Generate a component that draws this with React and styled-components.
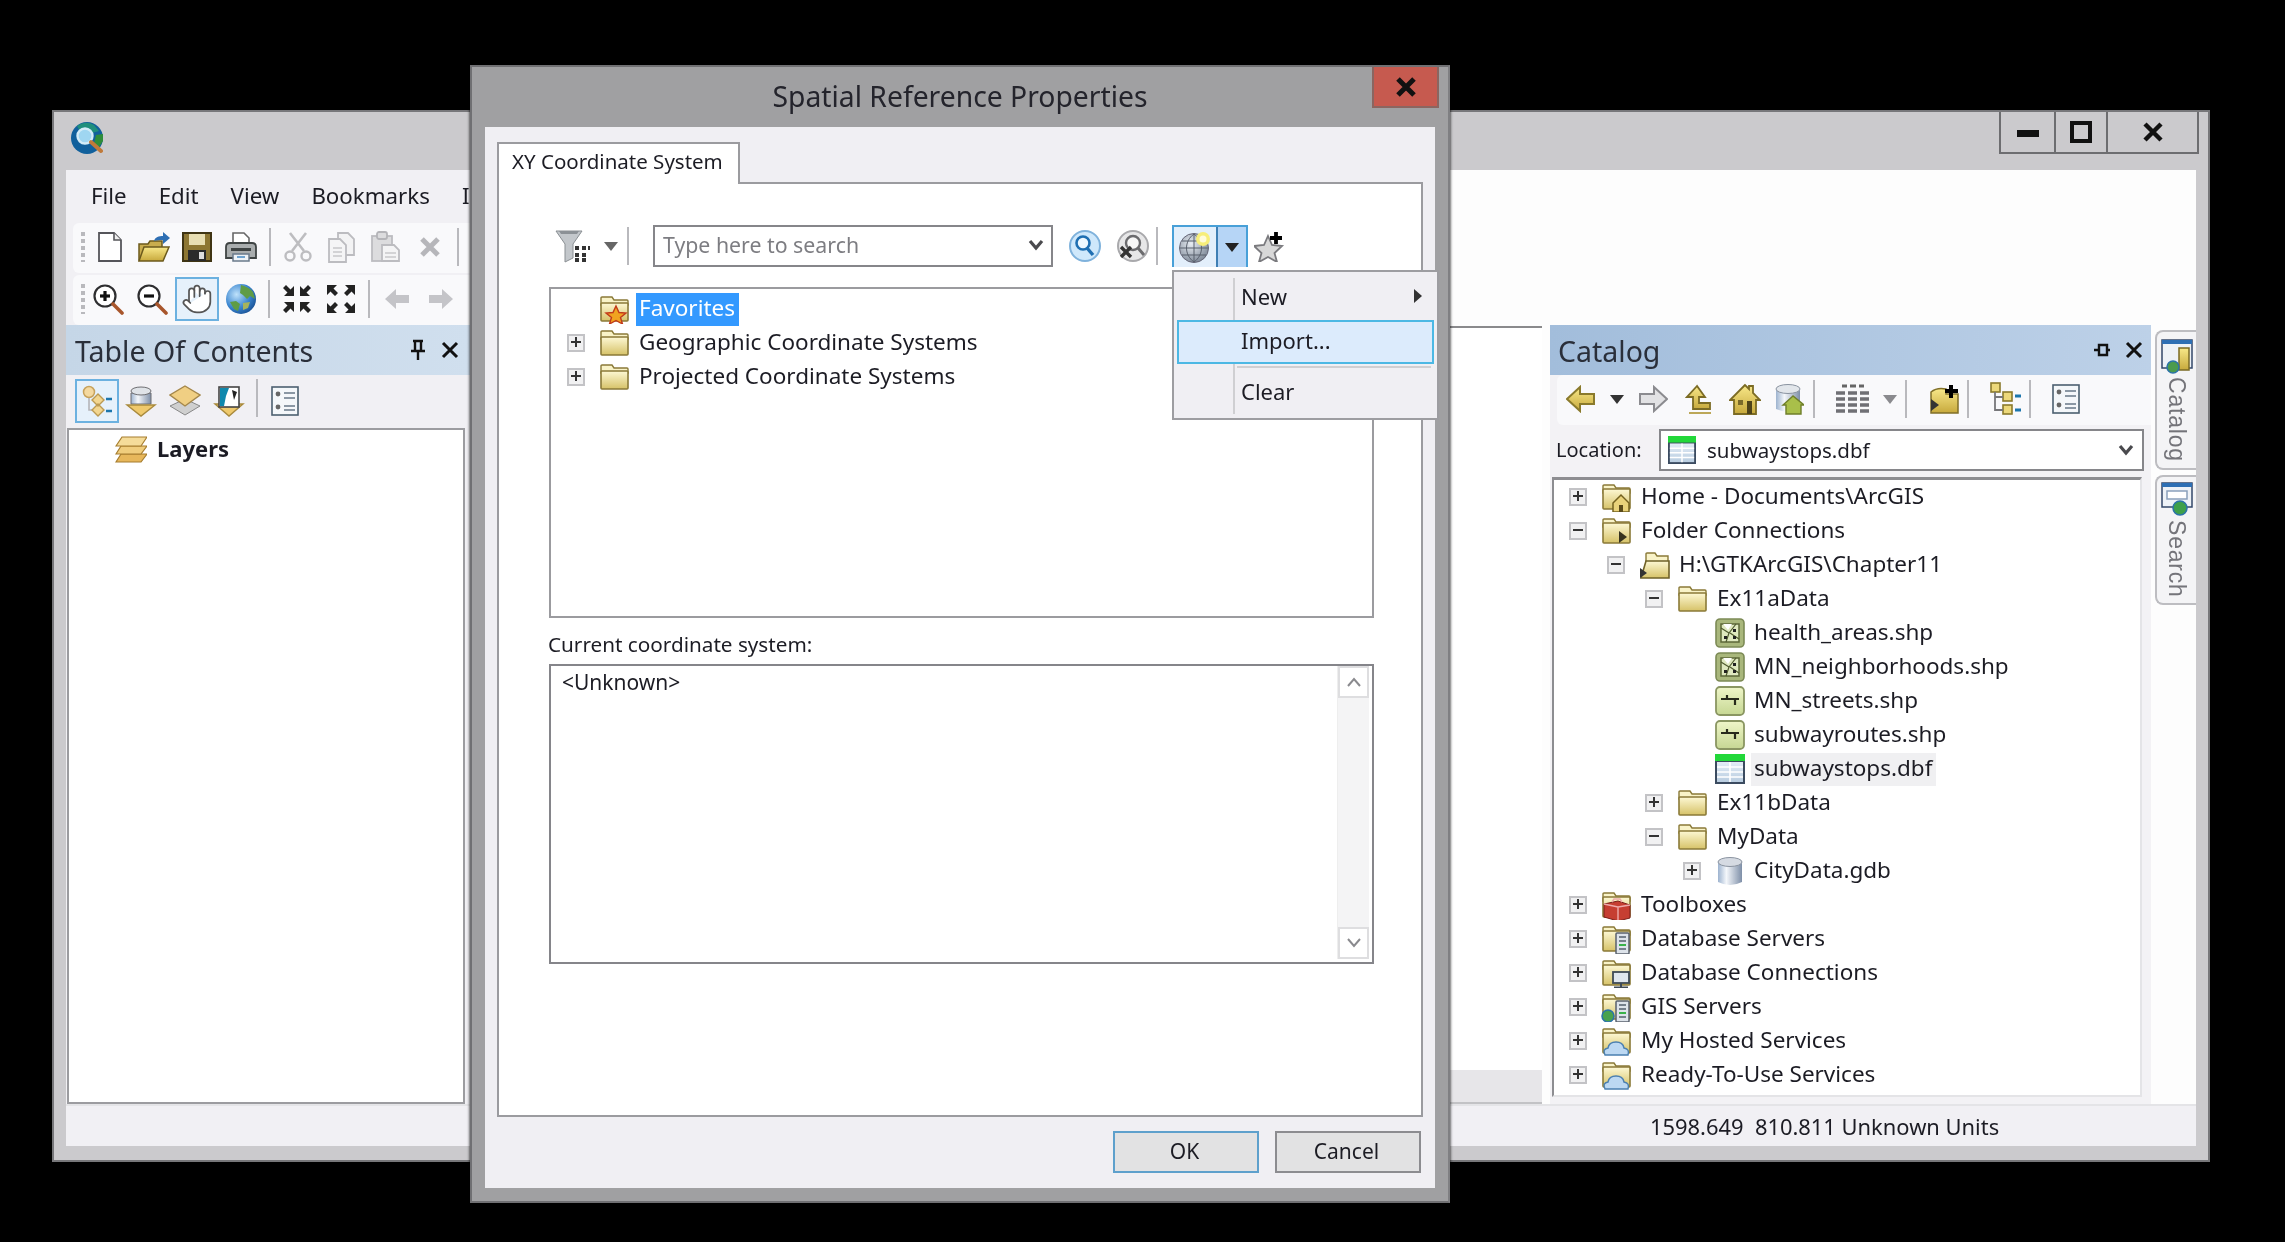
import React from 'react';
import styled, { createGlobalStyle } from 'styled-components';
import { Hand } from 'lucide-react';

const Global = createGlobalStyle`
  html, body { margin: 0; padding: 0; background: #000; }
  * { box-sizing: border-box; }
`;

const Desktop = styled.div`
  position: relative;
  width: 2285px;
  height: 1242px;
  background: #000;
  overflow: hidden;
  font-family: "Noto Sans", "Open Sans", sans-serif;
  color: #1c1c24;
  font-size: 22px;
  filter: blur(0.45px);
`;
const DefsSvg = styled.svg`position: absolute; width: 0; height: 0;`;
const Glyph = styled.svg`display: block; flex: none;`;

/* ---------- main window ---------- */
const MainWindow = styled.section`
  position: absolute;
  left: 52px; top: 110px;
  width: 2158px; height: 1052px;
  background: #cbcacd;
  border: 2px solid #77777a;
  display: flex;
  flex-direction: column;
`;
const MainTitle = styled.header`
  height: 58px;
  flex: none;
  display: flex;
  justify-content: space-between;
  align-items: flex-start;
  padding: 10px 9px 0 17px;
`;
const WinButtons = styled.div`
  display: flex;
  margin-top: -10px;
  height: 42px;
  border: 2px solid #6d6d70;
  border-top: 0;
`;
const WinButton = styled.div`
  width: ${p => p.$w}px;
  display: flex;
  align-items: center;
  justify-content: center;
  & + & { border-left: 2px solid #6d6d70; }
`;
const Client = styled.div`
  flex: 1;
  margin: 0 12px 14px;
  min-height: 0;
  display: flex;
  flex-direction: column;
  background: #f3f2f5;
`;
const MainRow = styled.div`flex: 1; min-height: 0; display: flex;`;
const LeftColumn = styled.div`
  width: 404px;
  flex: none;
  display: flex;
  flex-direction: column;
  overflow: hidden;
  background: #f1f0f4;
`;
const MenuBar = styled.nav`
  height: 53px;
  flex: none;
  display: flex;
  align-items: center;
  gap: 32px;
  padding: 0 0 3px 25px;
  white-space: nowrap;
  font-size: 22.3px;
`;
const ToolStrip = styled.div`
  height: 50px;
  flex: none;
  display: flex;
  align-items: center;
  margin-left: 7px;
  padding: 0 0 2px ${p => p.$pl ?? 15}px;
  margin-bottom: ${p => p.$mb ?? 2}px;
  background: #f9f9fb;
  border-radius: 6px 0 0 6px;
`;
const Grip = styled.i`
  position: relative;
  display: block;
  width: 4px;
  height: 30px;
  margin-right: 3px;
  margin-left: -7px;
  background: repeating-linear-gradient(180deg, #b9b9bd 0 4px, transparent 4px 7px);
`;
const Tool = styled.div`
  flex: none;
  width: ${p => p.$w ?? 44}px;
  height: 44px;
  padding-left: ${p => p.$pl ?? 0}px;
  display: flex;
  align-items: center;
  justify-content: center;
  gap: ${p => p.$gap ?? 0}px;
  ${p => p.$on && 'background:#e6f1fb; border:2px solid #6cb1e0;'}
`;
const Sep = styled.i`
  flex: none;
  display: block;
  width: ${p => p.$w ?? 12}px;
  height: 38px;
  background: linear-gradient(#b9b9bd,#b9b9bd) center/2px 100% no-repeat;
`;
const PaneHead = styled.div`
  height: 50px;
  flex: none;
  display: flex;
  align-items: center;
  justify-content: space-between;
  font-size: 28.5px;
  color: #2a2f3a;
  background: ${p => p.$grad};
`;
const HeadTitle = styled.span`padding: 1px 0 0 ${p => p.$pl}px;`;
const HeadTools = styled.div`
  display: flex;
  align-items: center;
  gap: ${p => p.$gap}px;
  padding-right: ${p => p.$pr}px;
`;
const TocStrip = styled.div`
  height: 53px;
  flex: none;
  display: flex;
  align-items: flex-start;
  padding: 4px 0 0 9px;
`;
const TocTree = styled.div`
  flex: 1;
  width: 398px;
  margin-left: 1px;
  background: #fff;
  border: 2px solid #9c9ca0;
  padding: 2px 0 0 46px;
`;
const LayerRow = styled.div`
  display: flex;
  align-items: center;
  gap: 10px;
  height: 32px;
  font-weight: 700;
  font-size: 22px;
`;
const RightColumn = styled.div`flex: 1; min-width: 0; display: flex; flex-direction: column; background: #fdfdfd;`;
const TopBlank = styled.div`height: 155px; flex: none; background: #fdfdfd;`;
const WorkRow = styled.div`flex: 1; min-height: 0; display: flex;`;
const MapColumn = styled.div`
  width: 1072px;
  flex: none;
  margin-right: 8px;
  display: flex;
  flex-direction: column;
  border-top: 2px solid #8a8a8c;
  margin-top: 1px;
`;
const MapCanvas = styled.div`flex: 1; background: #fff;`;
const MapScroll = styled.div`height: 34px; flex: none; background: #e7e6e9; border-bottom: 2px solid #c2c2c5;`;
const CatalogPane = styled.div`
  width: 601px;
  flex: none;
  display: flex;
  flex-direction: column;
  background: #f3f2f5;
`;
const LocationRow = styled.div`
  margin-top: 3px;
  height: 42px;
  flex: none;
  display: flex;
  align-items: center;
  padding: 1px 0 0 6px;
  font-size: 20px;
`;
const LocationLabel = styled.span`width: 103px; flex: none;`;
const Combo = styled.div`
  width: ${p => p.$w}px;
  height: 42px;
  flex: none;
  display: flex;
  align-items: center;
  gap: ${p => p.$gap ?? 9}px;
  padding: 0 ${p => p.$pr ?? 10}px ${p => p.$pb ?? 0}px ${p => p.$pl}px;
  background: #fff;
  border: 2px solid #86868a;
  color: ${p => p.$muted ? '#7d7d82' : 'inherit'};
  font-size: ${p => p.$fs}px;
`;
const ComboText = styled.span`flex: 1;`;
const CatTree = styled.div`
  margin: 7px 0 0 2px;
  width: 590px;
  height: 620px;
  flex: none;
  background: #fff;
  border-left: 2px solid #8d8d91;
  border-top: 3px solid #8d8d91;
  border-right: 2px solid #e4e4e7;
  border-bottom: 2px solid #e4e4e7;
  padding: 0 0 0 15px;
  overflow: hidden;
`;
const SideTabs = styled.aside`
  width: 45px;
  flex: none;
  padding: 5px 0 0 4px;
  display: flex;
  flex-direction: column;
  gap: 5px;
`;
const SideTab = styled.div`
  height: ${p => p.$h}px;
  display: flex;
  flex-direction: column;
  align-items: center;
  padding-top: ${p => p.$pt}px;
  background: #f4f4f6;
  border: 2px solid #bdbdc1;
  border-right: 0;
  border-radius: 8px 0 0 8px;
`;
const SideLabel = styled.span`
  writing-mode: vertical-rl;
  margin-top: ${p => p.$mt}px;
  font-family: "Liberation Sans", sans-serif;
  font-size: 23px;
  letter-spacing: 0.8px;
  line-height: 26px;
  color: #74747a;
`;
const StatusBar = styled.footer`
  height: 42px;
  flex: none;
  display: flex;
  align-items: center;
  justify-content: space-between;
  padding: 0 4px 0 1584px;
  font-size: 21.9px;
  background: #f1f0f4;
  border-top: 2px solid #e4e4e7;
`;
const Coord = styled.span`white-space: pre;`;

/* ---------- tree rows ---------- */
const Row = styled.div`
  height: 34px;
  display: flex;
  align-items: center;
  padding-left: ${p => p.$level * 38}px;
  white-space: nowrap;
  font-size: 22.5px;
`;
const ExpSlot = styled.span`width: 18px; height: 18px; flex: none; margin-right: 14px;`;
const Exp = styled.span`
  position: relative;
  display: block;
  width: 18px;
  height: 18px;
  background: #f1f1f2;
  border: 2px solid #c3c3c6;
  &::before {
    content: "";
    position: absolute;
    left: 2px; top: 5px;
    width: 10px; height: 2px;
    background: #333;
  }
  ${p => p.$plus && `&::after {
    content: "";
    position: absolute;
    left: 6px; top: 1px;
    width: 2px; height: 10px;
    background: #333;
  }`}
`;
const RowLabel = styled.span`
  margin-left: 6px;
  padding: 0 4px 0 3px;
  height: 33px;
  line-height: 30px;
  background: ${p => p.$sel === 'strong' ? '#3399ff' : p.$sel === 'soft' ? '#f0f0f2' : 'transparent'};
  color: ${p => p.$sel === 'strong' ? '#fff' : 'inherit'};
`;

/* ---------- dialog ---------- */
const Dialog = styled.section`
  position: absolute;
  left: 470px; top: 65px;
  width: 980px; height: 1138px;
  background: #a0a0a2;
  border: 2px solid #707073;
  border-right-color: #7f7f82;
  box-shadow: 0 0 3px #000;
  display: flex;
  flex-direction: column;
`;
const DialogTitle = styled.header`
  height: 60px;
  flex: none;
  display: grid;
  grid-template-columns: 78px 1fr 78px;
  font-size: 28.3px;
  color: #24242c;
`;
const TitleText = styled.h1`
  margin: 0;
  font: inherit;
  text-align: center;
  line-height: 58px;
`;
const CloseBox = styled.div`
  justify-self: end;
  margin-right: 9px;
  width: 67px;
  height: 41px;
  display: flex;
  align-items: center;
  justify-content: center;
  background: #c65a4f;
  border: 2px solid #8b6560;
  border-top: 0;
`;
const DialogBody = styled.div`
  flex: 1;
  margin: 0 13px 13px;
  padding: 15px 12px 0;
  background: #f0eff3;
  display: flex;
  flex-direction: column;
  min-height: 0;
`;
const TabHead = styled.div`
  width: 243px;
  height: 42px;
  flex: none;
  margin-bottom: -2px;
  position: relative;
  z-index: 1;
  padding-left: 13px;
  line-height: 35px;
  font-size: 20.5px;
  background: #fff;
  border: 2px solid #9b9b9f;
  border-bottom: 0;
`;
const TabPanel = styled.div`
  flex: none;
  height: 935px;
  background: #fff;
  border: 2px solid #9b9b9f;
  padding: 41px 47px 0 50px;
`;
const SearchRow = styled.div`height: 42px; display: flex; align-items: center;`;
const FilterWrap = styled.div`
  width: 77px;
  flex: none;
  display: flex;
  align-items: center;
  gap: 13px;
  padding-left: 6px;
`;
const IconSlot = styled.div`
  width: ${p => p.$w}px;
  flex: none;
  display: flex;
  align-items: center;
  justify-content: center;
`;
const SplitButton = styled.div`
  width: 76px;
  height: 42px;
  flex: none;
  display: flex;
  border: 2px solid #48a0d8;
  border-bottom: 0;
  background: #e3effb;
`;
const SplitMain = styled.div`width: 42px; display: flex; align-items: center; justify-content: center;`;
const SplitDrop = styled.div`
  flex: 1;
  display: flex;
  align-items: center;
  justify-content: center;
  background: #b6d5f6;
  border-left: 2px solid #3f7fb4;
`;
const RefTree = styled.div`
  margin-top: 20px;
  height: 331px;
  background: #fff;
  border: 2px solid #9b9b9f;
  padding: 3px 0 0 16px;
`;
const FieldLabel = styled.div`
  margin: 13px 0 7px -1px;
  height: 26px;
  line-height: 26px;
  font-size: 20.7px;
`;
const TextArea = styled.div`
  height: 300px;
  display: flex;
  justify-content: space-between;
  background: #fff;
  border: 2px solid #85858a;
  padding: 0 3px 3px 11px;
  font-size: 21px;
  line-height: 32px;
`;
const ScrollBar = styled.div`
  width: 32px;
  display: flex;
  flex-direction: column;
  justify-content: space-between;
  background: #f4f4f5;
  border-left: 1px solid #eee;
`;
const ScrollBtn = styled.div`
  height: 32px;
  display: flex;
  align-items: center;
  justify-content: center;
  background: #fff;
  border: 2px solid #dedee0;
`;
const Footer = styled.div`
  flex: none;
  display: flex;
  justify-content: flex-end;
  gap: 16px;
  padding: 14px 2px 0 0;
`;
const Btn = styled.div`
  width: 146px;
  height: 42px;
  text-align: center;
  line-height: 36px;
  padding-right: 3px;
  font-size: 21px;
  background: #e2e2e3;
  border: 2px solid ${p => p.$primary ? '#5ea0cc' : '#8c8c90'};
`;

/* ---------- popup ---------- */
const Popup = styled.div`
  position: absolute;
  left: 700px; top: 203px;
  width: 267px; height: 150px;
  padding: 3px 3px 0;
  background: linear-gradient(#cfcfd2,#cfcfd2) 59px 6px/2px 136px no-repeat, #f0eff3;
  border: 2px solid #9d9da1;
  font-size: 22px;
  z-index: 3;
`;
const PopupItem = styled.div`
  height: ${p => p.$h}px;
  display: flex;
  align-items: center;
  justify-content: space-between;
  padding: 0 12px ${p => p.$pb ?? 4}px ${p => p.$on ? 62 : 64}px;
  ${p => p.$on && 'background:#dcebfc; border:2px solid #4cb8e4;'}
`;
const PopupLine = styled.div`height: 2px; margin: 2px 3px 3px 60px; background: #cfcfd2;`;

/* ---------- icons ---------- */
const V = ({ w = 32, h = 32, vb, children }) => (
  <Glyph width={w} height={h} viewBox={vb || `0 0 ${w} ${h}`}>{children}</Glyph>
);

const Defs = () => (
  <DefsSvg aria-hidden="true">
    <defs>
      <linearGradient id="fold" x1="0" y1="0" x2="0" y2="1"><stop offset="0" stopColor="#fdf8d4"/><stop offset="1" stopColor="#d6c268"/></linearGradient>
      <linearGradient id="gold" x1="0" y1="0" x2="0" y2="1"><stop offset="0" stopColor="#f8e889"/><stop offset="1" stopColor="#c7a93c"/></linearGradient>
      <linearGradient id="cyl" x1="0" y1="0" x2="1" y2="0"><stop offset="0" stopColor="#9db3cf"/><stop offset=".35" stopColor="#f4f7fb"/><stop offset="1" stopColor="#7e8fa8"/></linearGradient>
      <radialGradient id="earth" cx=".35" cy=".35" r=".75"><stop offset="0" stopColor="#bfe2fb"/><stop offset=".6" stopColor="#3a85cf"/><stop offset="1" stopColor="#174c8f"/></radialGradient>
      <radialGradient id="grid" cx=".4" cy=".35" r=".8"><stop offset="0" stopColor="#e8edf3"/><stop offset="1" stopColor="#6b7787"/></radialGradient>
      <linearGradient id="shp" x1="0" y1="0" x2="0" y2="1"><stop offset="0" stopColor="#eff6c9"/><stop offset="1" stopColor="#c6d793"/></linearGradient>
      <linearGradient id="tbl" x1="0" y1="0" x2="0" y2="1"><stop offset="0" stopColor="#e2ecf6"/><stop offset="1" stopColor="#b9cde0"/></linearGradient>
    </defs>
  </DefsSvg>
);

const Logo = () => (
  <V>
    <circle cx="16" cy="16" r="16" fill="#11609c"/>
    <path d="M6 4a15 15 0 0 1 17-1l5 6-7 2-5-3-7 1z" fill="#1f8f7c"/>
    <path d="M25 13l7-1v7l-4 6-5-3z" fill="#2f8d3a"/>
    <circle cx="14" cy="14" r="7.500" fill="#9fd6f1" stroke="#d3ecf8" strokeWidth="2.400"/>
    <path d="M20 20l10 9" stroke="#c07a3a" strokeWidth="4" strokeLinecap="round"/>
  </V>
);
const NewDoc = () => <V><path d="M5 2h15l7 7v21H5z" fill="#fff" stroke="#55555a" strokeWidth="1.8"/><path d="M20 2v7h7" fill="#eee" stroke="#55555a" strokeWidth="1.6"/></V>;
const OpenFolder = () => <V vb="0 0 34 32" w={34}><path d="M2 13h9l2-3h12v19H2z" fill="#c9ad4e" stroke="#6c5a1c" strokeWidth="1.5"/><path d="M2 30l5-14h25l-6 14z" fill="url(#gold)" stroke="#6c5a1c" strokeWidth="1.5"/><path d="M17 10c1-4 5-5 9-5V1l7 6-7 6V9c-4 0-7 0-9 1z" fill="#2e6fb4"/></V>;
const Save = () => <V><path d="M2 2h28v28H2z" fill="#8d7632" stroke="#3f3413" strokeWidth="2"/><rect x="8" y="3" width="16" height="11" fill="#e8deb2"/><rect x="7" y="19" width="18" height="11" fill="#2a2a2a"/><rect x="18" y="21" width="5" height="7" fill="#ddd"/></V>;
const Print = () => <V vb="0 0 34 32" w={34}><path d="M9 14V2h11l5 5v7z" fill="#fff" stroke="#666" strokeWidth="1.6"/><path d="M2 16q0-4 4-4h22q4 0 4 4v11H2z" fill="#a9adae" stroke="#3f4444" strokeWidth="1.8"/><rect x="7" y="17" width="20" height="3" fill="#3f4444"/><rect x="9" y="23" width="16" height="7" fill="#eef3f7" stroke="#6a7a8a" strokeWidth="1.5"/><rect x="13" y="25" width="8" height="2" fill="#6fa3cf"/></V>;
const Cut = () => <V><path d="M8 2l14 18M24 2L10 20" stroke="#bdbdc0" strokeWidth="2.6" fill="none"/><circle cx="8" cy="25" r="4.5" fill="none" stroke="#bdbdc0" strokeWidth="2.4"/><circle cx="24" cy="25" r="4.5" fill="none" stroke="#bdbdc0" strokeWidth="2.4"/></V>;
const Copy = () => <V><path d="M12 2h10l6 6v16H12z" fill="#f3f3f4" stroke="#bcbcc0" strokeWidth="1.8"/><path d="M3 8h11l6 6v17H3z" fill="#f5f5f6" stroke="#bcbcc0" strokeWidth="1.8"/><path d="M7 17h9M7 21h9M7 25h9" stroke="#c7c7ca" strokeWidth="1.6"/></V>;
const Paste = () => <V><rect x="2" y="5" width="20" height="25" fill="#dcdcde" stroke="#bcbcc0" strokeWidth="1.8"/><rect x="7" y="1" width="10" height="7" rx="2" fill="#dcdcde" stroke="#b4b4b8" strokeWidth="1.8"/><path d="M12 14h12l5 5v11H12z" fill="#f4f4f5" stroke="#bcbcc0" strokeWidth="1.8"/><path d="M15 22h11M15 26h11" stroke="#c7c7ca" strokeWidth="1.6"/></V>;
const Del = () => <V w={22} h={22}><path d="M3 3l16 16M19 3L3 19" stroke="#b6b6ba" strokeWidth="5"/></V>;
const Zoom = ({ plus }) => <V><circle cx="13" cy="13" r="10.5" fill="#fff" stroke="#2e2e30" strokeWidth="2.2"/><path d="M8 13h10" stroke="#111" strokeWidth="3.2"/>{plus && <path d="M13 8v10" stroke="#111" strokeWidth="3.2"/>}<path d="M21 21l9 9" stroke="#a8562c" strokeWidth="3.6" strokeLinecap="round"/></V>;
const HandIcon = () => <Hand size={32} strokeWidth={1.3} color="#555" fill="#fff"/>;
const Earth = () => <V><circle cx="16" cy="16" r="15" fill="url(#earth)"/><path d="M16 2c4 1 9 3 12 7l2 7-5-3-3 3-4-4-3-2zM5 19l6-1 4 3-2 7-4-2z" fill="#5f9c46"/><path d="M18 20l7-1-2 6-5 2z" fill="#a7b35d"/></V>;
const FixedOut = () => <V><path d="M2 2h10L8.500 5.500 13 10l-3 3-4.500-4.500L2 12zM30 2H20l3.500 3.500L19 10l3 3 4.500-4.500L30 12zM2 30h10l-3.500-3.500L13 22l-3-3-4.500 4.500L2 20zM30 30H20l3.500-3.500L19 22l3-3 4.500 4.500L30 20z" fill="#222"/></V>;
const FixedInner = () => <V><path d="M13 13H3l3.500-3.500L2 5l3-3 4.500 4.500L13 3zM19 13h10l-3.500-3.500L30 5l-3-3-4.500 4.500L19 3zM13 19H3l3.500 3.500L2 27l3 3 4.500-4.500L13 29zM19 19h10l-3.500 3.500L30 27l-3 3-4.500-4.500L19 29z" fill="#222"/></V>;
const ArrowGray = ({ left }) => <V w={28} h={24}><path d={left ? 'M2 12L13 2v6h13v8H13v6z' : 'M26 12L15 2v6H2v8h13v6z'} fill="#c4c4c8"/></V>;
const Tree1 = () => <V><circle cx="8" cy="7" r="5.500" fill="#f4d9a0" stroke="#c7a25c" strokeWidth="1.5"/><path d="M8 13v12h8" fill="none" stroke="#b5b5b9" strokeWidth="1.6"/><path d="M17 9l6 6-6 6-6-6zM17 19l6 6-6 6-6-6z" fill="#f2d690" stroke="#bb9a52" strokeWidth="1.4"/><path d="M25 14h6M25 26h6" stroke="#1c76ad" strokeWidth="2.6"/></V>;
const ByDb = () => <V><path d="M6 8v11h20V8z" fill="url(#cyl)" stroke="#6e6e72"/><ellipse cx="16" cy="6" rx="10" ry="4" fill="#dfe3e8" stroke="#6e6e72"/><path d="M2 20h28l-14 11z" fill="#efc96c" stroke="#a98a3d" strokeWidth="1.4"/></V>;
const ByLayer = () => <V><path d="M16 14L31 21 16 30 1 21z" fill="#cfcfcf" stroke="#888"/><path d="M16 1L31 10 16 21 1 10z" fill="#f0cf83" stroke="#a5874a" strokeWidth="1.4"/></V>;
const BySel = () => <V><path d="M2 19h28L16 31z" fill="#efc96c" stroke="#a98a3d" strokeWidth="1.4"/><rect x="6" y="2" width="20" height="20" fill="#fff" stroke="#444" strokeWidth="1.6"/><path d="M7 3h9l-3 8-2 10H7z" fill="#0f88ad"/><path d="M19 5l5 2-3 8z" fill="#222"/></V>;
const Options = () => <V w={28} h={30}><rect x="1" y="1" width="26" height="28" fill="#f4f7fa" stroke="#4c5f70" strokeWidth="1.6"/><circle cx="7" cy="8" r="2.4" fill="#666"/><circle cx="7" cy="21" r="2.4" fill="#666"/><path d="M13 7h11M13 12h11M13 20h11M13 24h11" stroke="#8a97a4" strokeWidth="1.8"/></V>;
const Pin = () => <V w={16} h={22}><path d="M3 2h10M5 2v10M11 2v10M1 12h14M8 12v9" stroke="#111" strokeWidth="2.400" fill="none"/></V>;
const SideX = ({ s = 18, w = 3 }) => <V w={s} h={s}><path d={`M2 2L${s - 2} ${s - 2}M${s - 2} 2L2 ${s - 2}`} stroke="#111" strokeWidth={w}/></V>;
const PinSide = () => <V w={18} h={16}><path d="M1 8h5M6 3h8v10H6zM14 8h3" stroke="#111" strokeWidth="2.400" fill="none"/></V>;
const Layers = () => <V><path d="M6 22h26l-6 8H1z" fill="#e7b75b" stroke="#a67d2e" strokeWidth="1.200"/><path d="M6 14h26l-6 8H1z" fill="#f0cd7d" stroke="#a67d2e" strokeWidth="1.200"/><path d="M7 5h25l-6 9H1z" fill="#f5dc9a" stroke="#a67d2e" strokeWidth="1.200"/></V>;
const Caret = ({ c = '#333', s = 14 }) => <V w={s} h={9}><path d={`M0 0h${s}L${s / 2} 9z`} fill={c}/></V>;
const Chevron = ({ c = '#4a4a4e' }) => <V w={16} h={12}><path d="M2 2l6 7 6-7" fill="none" stroke={c} strokeWidth="3.200"/></V>;
const Filter = () => <V w={36} h={34}><path d="M1 2h26L18 15v14l-8 4V15z" fill="#c3c7cb" stroke="#8a8f93"/><path d="M4 2h20l-2 3H6z" fill="#8c9196"/><path d="M20 17h4v4h-4zM27 17h4v4h-4zM20 24h4v4h-4zM27 24h4v4h-4zM20 29h4v4h-4zM27 29h4v4h-4zM33 17h2v4h-2z" fill="#333"/></V>;
const Magnify = () => <V><circle cx="16" cy="16" r="15" fill="#cfe8fb" stroke="#7fb2dc" strokeWidth="2"/><circle cx="14" cy="13" r="6.500" fill="#eef8ff" stroke="#1f6fb2" strokeWidth="2.600"/><path d="M18 18l6 7" stroke="#1f6fb2" strokeWidth="3.400"/></V>;
const ClearSearch = () => <V><circle cx="16" cy="16" r="15" fill="#e7e7e8" stroke="#a9a9ac" strokeWidth="2"/><circle cx="16" cy="13" r="7" fill="#f7f7f7" stroke="#6b6b6e" strokeWidth="2.400"/><path d="M21 18l6 7" stroke="#6b6b6e" strokeWidth="3"/><path d="M4 17l10 10M14 17L4 27" stroke="#333" strokeWidth="3.400"/></V>;
const GridGlobe = () => <V><circle cx="15" cy="17" r="14.500" fill="url(#grid)" stroke="#667"/><path d="M1 17h28M3 10h24M3 24h24M15 3v28M15 3c-10 7-10 21 0 28M15 3c10 7 10 21 0 28" fill="none" stroke="#59606c" strokeWidth="1"/><circle cx="24" cy="8" r="7" fill="#f7ee7a"/><circle cx="24" cy="8" r="3.500" fill="#fffbd8"/></V>;
const StarPlus = () => <V><path d="M14 6l4 9 10 1-7.500 7 2.500 9-9-5-9 5 2.500-9L0 16l10-1z" fill="#d8d8d8" stroke="#7a7a7e" strokeWidth="1.800"/><path d="M22 2v12M16 8h12" stroke="#000" strokeWidth="3.800"/></V>;
const FolderBase = ({ children, tall }) => (
  <V w={31} h={30}>
    <path d="M2 8V4q0-1 1-1h10l2 3h13q1 0 1 1v4H2z" fill="#f9f3c8" stroke="#8a7a38" strokeWidth="1.400"/>
    <rect x="2" y={tall ? 7 : 9} width="27" height={tall ? 20 : 18} rx="1" fill="url(#fold)" stroke="#8a7a38" strokeWidth="1.600"/>
    {children}
  </V>
);
const Fav = () => <FolderBase><path d="M17 12l3 6.500 7 .5-5.500 4.500L23.500 30 17 26.500 10.500 30l2-6.500L7 19l7-.5z" fill="#f1a320" stroke="#c23a1a" strokeWidth="1.400"/></FolderBase>;
const HomeFold = () => <FolderBase tall><path d="M12 21l8-8 8 8v9H12z" fill="#e9d27a" stroke="#73611f" strokeWidth="1.500"/><rect x="18" y="23" width="4" height="7" fill="#5a4a1a"/></FolderBase>;
const ConnFold = () => <FolderBase tall><path d="M18 15l8 6-8 6z" fill="#37331f"/></FolderBase>;
const Conn2 = () => <V w={31} h={30}><path d="M7 8V4q0-1 1-1h8l2 3h11v6H7z" fill="#f9f3c8" stroke="#8a7a38" strokeWidth="1.400"/><path d="M2 28l5-17h23v17z" fill="url(#fold)" stroke="#6f6128" strokeWidth="1.600"/><path d="M1 18l7 5-7 5z" fill="#333"/></V>;
const ShpPoly = () => <V w={30} h={30}><rect x="1" y="1" width="28" height="28" rx="4" fill="#a9b77c" stroke="#7c8a55" strokeWidth="1.600"/><rect x="6" y="6" width="18" height="18" fill="#dfe8bf" stroke="#5d6838" strokeWidth="1.500"/><path d="M6 10l8 5-3 9M14 15l7-9M15 15l9 6" fill="none" stroke="#4f5a2f" strokeWidth="1.200"/><path d="M8 6h9l-4 6z" fill="#fff"/><path d="M18 11h3v3h-3zM9 18h3v3H9zM18 18h3v3h-3z" fill="#222"/></V>;
const ShpLine = () => <V w={30} h={30}><rect x="1" y="1" width="28" height="28" rx="4" fill="url(#shp)" stroke="#8a9662" strokeWidth="1.800"/><path d="M6 13h18M12 9v4M20 13v6" fill="none" stroke="#272a1c" strokeWidth="2.200"/></V>;
const TableIcon = ({ w = 30, h = 30 }) => <V w={w} h={h} vb="0 0 30 30"><rect x="0" y="0" width="30" height="30" fill="#3b4b60"/><rect x="0" y="0" width="30" height="7" fill="#22d83a"/><rect x="2" y="8" width="26" height="20" fill="url(#tbl)"/><path d="M15 8v20M2 13h26M2 18h26M2 23h26" stroke="#fff" strokeWidth="1.600"/></V>;
const Gdb = () => <V w={30} h={30}><path d="M3 6v20q12 6 24 0V6z" fill="url(#cyl)"/><ellipse cx="15" cy="6" rx="12" ry="4.500" fill="#d5dae2" stroke="#8a93a0"/></V>;
const Toolbox = () => <FolderBase tall><path d="M3 14l14-3 12 4v13l-12 3-14-4z" fill="#c63e32" stroke="#7a1f18"/><path d="M3 14l14 3 12-2M17 17v14M11 12l2-3 6 0 2 3" fill="none" stroke="#eaa" strokeWidth="1.400"/></FolderBase>;
const Server = () => <g><rect x="15" y="9" width="13" height="21" rx="1" fill="#dde3ea" stroke="#59626e" strokeWidth="1.500"/><path d="M18 13h7M18 17h7M18 25h7" stroke="#75808c" strokeWidth="1.800"/><path d="M18 21h7" stroke="#39b24a" strokeWidth="2"/></g>;
const DbServers = () => <FolderBase tall><Server/></FolderBase>;
const GisServers = () => <FolderBase tall><Server/><circle cx="7" cy="24" r="6" fill="#49a24e" stroke="#2b73a8" strokeWidth="1.500"/></FolderBase>;
const DbConn = () => <FolderBase tall><rect x="12" y="14" width="16" height="11" fill="#dfe6ee" stroke="#3f4a56" strokeWidth="1.800"/><path d="M20 25v4M13 29.500h14" stroke="#3f4a56" strokeWidth="2"/></FolderBase>;
const Cloud = () => <FolderBase tall><path d="M4 29q-3-6 3-7 1-6 8-6 7 0 8 6 6 1 4 7z" fill="#bcd8f2" stroke="#4a7fb0" strokeWidth="1.500"/></FolderBase>;
const ArrowYellow = ({ left }) => <V w={30} h={28}><path d={left ? 'M1 14L14 2v7h14v10H14v7z' : 'M29 14L16 2v7H2v10h14v7z'} fill={left ? 'url(#gold)' : '#e2e2e4'} stroke={left ? '#8a7a2c' : '#8b8b8f'} strokeWidth="2"/></V>;
const UpArrow = () => <V w={28} h={30}><path d="M12 2L2 13h6v12h17v-6H14v-6h6z" fill="url(#gold)" stroke="#7b6b24" strokeWidth="1.800"/><path d="M4 29h22" stroke="#bca758" strokeWidth="2"/></V>;
const Home = () => <V w={32} h={32}><path d="M16 2L1 17h4v14h22V17h4L24 10V3h-4v3z" fill="url(#gold)" stroke="#7b6b24" strokeWidth="1.800"/><rect x="9" y="17" width="5" height="5" fill="#7a6a2a"/><rect x="18" y="18" width="5" height="13" fill="#4e431a"/></V>;
const HomeDb = () => <V w={30} h={32}><path d="M2 6v20q12 5 24 0V6z" fill="url(#cyl)"/><ellipse cx="14" cy="6" rx="12" ry="4.500" fill="#e2e6eb" stroke="#8a93a0"/><path d="M19 13l-10 9h3v9h15v-9h3z" fill="#a9bf4a" stroke="#6f7f2a" strokeWidth="1.400"/></V>;
const GridView = () => <V w={34} h={30}><path d="M6 2h5M14 2h6M23 2h5" stroke="#666" strokeWidth="3"/><path d="M0 9h34M0 15h34M0 21h34M0 27h34" stroke="#707075" strokeWidth="3.500" strokeDasharray="9 3"/></V>;
const ConnectFolder = () => <V w={32} h={30}><path d="M3 29V8q6-5 15-3v5h12v19z" fill="url(#gold)" stroke="#806f28" strokeWidth="1.500"/><path d="M3 15l8 6-8 6z" fill="#333"/><path d="M23 1v13M17 7h13" stroke="#000" strokeWidth="4"/></V>;
const TreeView = () => <V w={32} h={34}><rect x="1" y="1" width="9" height="9" fill="#ecd87a" stroke="#8a7a2c" strokeWidth="1.600"/><rect x="13" y="10" width="9" height="9" fill="#ecd87a" stroke="#8a7a2c" strokeWidth="1.600"/><rect x="13" y="23" width="9" height="9" fill="#ecd87a" stroke="#8a7a2c" strokeWidth="1.600"/><path d="M5 10v18h8M5 15h8" fill="none" stroke="#77777a" strokeWidth="1.800"/><path d="M25 14h6M25 28h6" stroke="#1c76ad" strokeWidth="2.800"/></V>;
const TabCatalog = () => <V w={32} h={36}><rect x="1" y="2" width="30" height="28" fill="#eef2f7" stroke="#33476a" strokeWidth="1.500"/><rect x="1" y="2" width="30" height="4" fill="#2e6fb4"/><path d="M18 10h10v22H18z" fill="url(#gold)" stroke="#7b6b24" strokeWidth="1.500"/><circle cx="12" cy="29" r="6" fill="#4b9b4e" stroke="#2b73a8" strokeWidth="1.500"/></V>;
const TabSearch = () => <V w={32} h={36}><rect x="1" y="2" width="30" height="24" fill="#eef2f7" stroke="#33476a" strokeWidth="1.500"/><rect x="1" y="2" width="30" height="4" fill="#2e6fb4"/><path d="M6 10h20v8H6z" fill="#fff" stroke="#8aa0bc" strokeWidth="1.500"/><circle cx="19" cy="27" r="7" fill="#3ea04a" stroke="#2b73a8" strokeWidth="1.500"/></V>;
const Minimize = () => <V w={22} h={10}><rect x="0" y="3" width="22" height="7" fill="#111"/></V>;
const Maximize = () => <V w={22} h={22}><rect x="2" y="2" width="18" height="18" fill="none" stroke="#111" strokeWidth="4"/></V>;
const TriRight = () => <V w={8} h={14}><path d="M0 0l8 7-8 7z" fill="#333"/></V>;

const catalogRows = [
  { l: 0, e: 'p', I: HomeFold, t: 'Home - Documents\\ArcGIS' },
  { l: 0, e: 'm', I: ConnFold, t: 'Folder Connections' },
  { l: 1, e: 'm', I: Conn2, t: 'H:\\GTKArcGIS\\Chapter11' },
  { l: 2, e: 'm', I: FolderBase, t: 'Ex11aData' },
  { l: 3, I: ShpPoly, t: 'health_areas.shp' },
  { l: 3, I: ShpPoly, t: 'MN_neighborhoods.shp' },
  { l: 3, I: ShpLine, t: 'MN_streets.shp' },
  { l: 3, I: ShpLine, t: 'subwayroutes.shp' },
  { l: 3, I: TableIcon, t: 'subwaystops.dbf', s: 'soft' },
  { l: 2, e: 'p', I: FolderBase, t: 'Ex11bData' },
  { l: 2, e: 'm', I: FolderBase, t: 'MyData' },
  { l: 3, e: 'p', I: Gdb, t: 'CityData.gdb' },
  { l: 0, e: 'p', I: Toolbox, t: 'Toolboxes' },
  { l: 0, e: 'p', I: DbServers, t: 'Database Servers' },
  { l: 0, e: 'p', I: DbConn, t: 'Database Connections' },
  { l: 0, e: 'p', I: GisServers, t: 'GIS Servers' },
  { l: 0, e: 'p', I: Cloud, t: 'My Hosted Services' },
  { l: 0, e: 'p', I: Cloud, t: 'Ready-To-Use Services' },
];
const refRows = [
  { l: 0, I: Fav, t: 'Favorites', s: 'strong' },
  { l: 0, e: 'p', I: FolderBase, t: 'Geographic Coordinate Systems' },
  { l: 0, e: 'p', I: FolderBase, t: 'Projected Coordinate Systems' },
];

const TreeRow = ({ l, e, I, t, s }) => (
  <Row $level={l}>
    <ExpSlot>{e && <Exp $plus={e === 'p'} />}</ExpSlot>
    <I />
    <RowLabel $sel={s}>{t}</RowLabel>
  </Row>
);

export default function App() {
  return (
    <Desktop>
      <Global />
      <Defs />
      <MainWindow>
        <MainTitle>
          <Logo />
          <WinButtons>
            <WinButton $w={53}><Minimize /></WinButton>
            <WinButton $w={52}><Maximize /></WinButton>
            <WinButton $w={91}><SideX s={20} w={4.500} /></WinButton>
          </WinButtons>
        </MainTitle>
        <Client>
          <MainRow>
            <LeftColumn>
              <MenuBar>
                <span>File</span><span>Edit</span><span>View</span><span>Bookmarks</span><span>Insert</span>
              </MenuBar>
              <ToolStrip>
                <Grip />
                <Tool><NewDoc /></Tool><Tool $w={43}><OpenFolder /></Tool><Tool $w={43}><Save /></Tool><Tool $w={46}><Print /></Tool>
                <Sep />
                <Tool><Cut /></Tool><Tool><Copy /></Tool><Tool><Paste /></Tool><Tool><Del /></Tool>
                <Sep />
              </ToolStrip>
              <ToolStrip $mb={0}>
                <Grip />
                <Tool $w={40}><Zoom plus /></Tool><Tool $w={47}><Zoom /></Tool><Tool $on><HandIcon /></Tool><Tool><Earth /></Tool>
                <Sep />
                <Tool><FixedInner /></Tool><Tool><FixedOut /></Tool>
                <Sep />
                <Tool><ArrowGray left /></Tool><Tool><ArrowGray /></Tool>
              </ToolStrip>
              <PaneHead $grad="linear-gradient(90deg,#c5d6e7,#d0dfee)">
                <HeadTitle $pl={9}>Table Of Contents</HeadTitle>
                <HeadTools $gap={15} $pr={11}><Pin /><SideX /></HeadTools>
              </PaneHead>
              <TocStrip>
                <Tool $on><Tree1 /></Tool><Tool><ByDb /></Tool><Tool><ByLayer /></Tool><Tool><BySel /></Tool>
                <Sep />
                <Tool><Options /></Tool>
              </TocStrip>
              <TocTree>
                <LayerRow><Layers />Layers</LayerRow>
              </TocTree>
            </LeftColumn>
            <RightColumn>
              <TopBlank />
              <WorkRow>
                <MapColumn>
                  <MapCanvas />
                  <MapScroll />
                </MapColumn>
                <CatalogPane>
                  <PaneHead $grad="linear-gradient(90deg,#a2bddb,#bdd1e8)">
                    <HeadTitle $pl={8}>Catalog</HeadTitle>
                    <HeadTools $gap={14} $pr={8}><PinSide /><SideX /></HeadTools>
                  </PaneHead>
                  <ToolStrip $pl={2} $mb={0}>
                    <Tool><ArrowYellow left /></Tool>
                    <Tool $w={28}><Caret /></Tool>
                    <Tool><ArrowYellow /></Tool>
                    <Tool $w={48}><UpArrow /></Tool>
                    <Tool><Home /></Tool>
                    <Tool $w={44}><HomeDb /></Tool>
                    <Sep $w={6} />
                    <Tool $w={86} $pl={12} $gap={13}><GridView /><Caret c="#8a8a8e" /></Tool>
                    <Sep $w={6} />
                    <Tool $w={56} $pl={14}><ConnectFolder /></Tool>
                    <Sep $w={6} />
                    <Tool $w={56} $pl={14}><TreeView /></Tool>
                    <Sep $w={6} />
                    <Tool $w={56} $pl={10}><Options /></Tool>
                  </ToolStrip>
                  <LocationRow>
                    <LocationLabel>Location:</LocationLabel>
                    <Combo $w={485} $pl={5} $pr={8} $fs={20.500}>
                      <TableIcon w={32} h={28} />
                      <ComboText>subwaystops.dbf</ComboText>
                      <Chevron />
                    </Combo>
                  </LocationRow>
                  <CatTree>
                    {catalogRows.map(r => <TreeRow key={r.t} {...r} />)}
                  </CatTree>
                </CatalogPane>
                <SideTabs>
                  <SideTab $h={140} $pt={6}><TabCatalog /><SideLabel $mt={3}>Catalog</SideLabel></SideTab>
                  <SideTab $h={130} $pt={4}><TabSearch /><SideLabel $mt={3}>Search</SideLabel></SideTab>
                </SideTabs>
              </WorkRow>
            </RightColumn>
          </MainRow>
          <StatusBar>
            <Coord>1598.649  810.811 Unknown Units</Coord>
          </StatusBar>
        </Client>
      </MainWindow>

      <Dialog>
        <DialogTitle>
          <span />
          <TitleText>Spatial Reference Properties</TitleText>
          <CloseBox><SideX s={20} w={5} /></CloseBox>
        </DialogTitle>
        <DialogBody>
          <TabHead>XY Coordinate System</TabHead>
          <TabPanel>
            <SearchRow>
              <FilterWrap><Filter /><Caret c="#666" /></FilterWrap>
              <Sep $w={4} />
              <IconSlot $w={23} />
              <Combo $w={400} $pl={8} $pr={7} $pb={3} $muted $fs={21.300}>
                <ComboText>Type here to search</ComboText>
                <Chevron />
              </Combo>
              <IconSlot $w={63}><Magnify /></IconSlot>
              <IconSlot $w={33}><ClearSearch /></IconSlot>
              <Sep $w={16} />
              <IconSlot $w={7} />
              <SplitButton>
                <SplitMain><GridGlobe /></SplitMain>
                <SplitDrop><Caret c="#222" /></SplitDrop>
              </SplitButton>
              <IconSlot $w={44}><StarPlus /></IconSlot>
            </SearchRow>
            <RefTree>
              {refRows.map(r => <TreeRow key={r.t} {...r} />)}
            </RefTree>
            <FieldLabel>Current coordinate system:</FieldLabel>
            <TextArea>
              <span>&lt;Unknown&gt;</span>
              <ScrollBar>
                <ScrollBtn><V w={16} h={10}><path d="M2 9l6-7 6 7" fill="none" stroke="#8a8a8e" strokeWidth="2"/></V></ScrollBtn>
                <ScrollBtn><V w={16} h={10}><path d="M2 1l6 7 6-7" fill="none" stroke="#8a8a8e" strokeWidth="2"/></V></ScrollBtn>
              </ScrollBar>
            </TextArea>
          </TabPanel>
          <Footer>
            <Btn $primary>OK</Btn>
            <Btn>Cancel</Btn>
          </Footer>
        </DialogBody>
        <Popup>
          <PopupItem $h={45}><span>New</span><TriRight /></PopupItem>
          <PopupItem $h={44} $on $pb={5}>Import...</PopupItem>
          <PopupLine />
          <PopupItem $h={46} $pb={6}>Clear</PopupItem>
        </Popup>
      </Dialog>
    </Desktop>
  );
}
